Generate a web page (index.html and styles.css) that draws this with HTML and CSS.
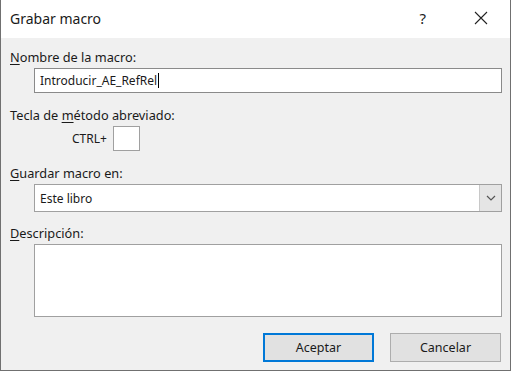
FILE: index.html
```html
<!DOCTYPE html>
<html lang="es">
<head>
<meta charset="utf-8">
<title>Grabar macro</title>
<link rel="stylesheet" href="styles.css">
</head>
<body>
<div class="window">
  <div class="titlebar">
    <span class="title">Grabar macro</span>
    <span class="help">?</span>
    <span class="close">
      <svg width="14" height="14" viewBox="0 0 14 14"><path d="M1 1 L13 13 M13 1 L1 13" stroke="#222" stroke-width="1.1" fill="none"/></svg>
    </span>
  </div>
  <div class="content">
    <div class="field f1">
      <div class="label"><u>N</u>ombre de la macro:</div>
      <div class="control input"><span>Introducir_AE_RefRel</span><span class="caret"></span></div>
    </div>
    <div class="field f2">
      <div class="label">Tecla de <u>m</u>étodo abreviado:</div>
      <div class="shortcut"><span class="ctrl">CTRL+</span><span class="keybox"></span></div>
    </div>
    <div class="field f3">
      <div class="label"><u>G</u>uardar macro en:</div>
      <div class="control select"><span class="value">Este libro</span><span class="drop"><svg width="10" height="6" viewBox="0 0 10 6"><path d="M1 1 L5 5 L9 1" stroke="#555" stroke-width="1.2" fill="none"/></svg></span></div>
    </div>
    <div class="field f4">
      <div class="label"><u>D</u>escripción:</div>
      <div class="control textarea"></div>
    </div>
    <div class="buttons">
      <div class="btn primary">Aceptar</div>
      <div class="btn">Cancelar</div>
    </div>
  </div>
</div>
</body>
</html>
```
FILE: styles.css
```css
html, body {
  margin: 0;
  padding: 0;
  background: #ffffff;
}
body {
  font-family: "Noto Sans", "Open Sans", sans-serif;
  font-size: 12px;
  color: #1a1a1a;
}
.window {
  width: 509px;
  height: 370px;
  border-left: 1px solid #707070;
  border-right: 1px solid #707070;
  border-bottom: 1px solid #707070;
  background: #f0f0f0;
  display: flex;
  flex-direction: column;
}
.titlebar {
  height: 38px;
  background: #ffffff;
  display: flex;
  align-items: center;
  padding-left: 9px;
  box-sizing: border-box;
  padding-bottom: 2px;
}
.title {
  font-size: 14px;
  color: #1a1a1a;
  flex: 1;
}
.help {
  font-size: 15px;
  color: #222;
  margin-right: 48px;
}
.close {
  display: flex;
  margin-right: 22px;
}
.content {
  padding: 10px 8px 0 9px;
  display: flex;
  flex-direction: column;
}
.field {
  display: flex;
  flex-direction: column;
  gap: 2px;
}
.label {
  line-height: 18px;
  height: 18px;
  font-size: 12.75px;
}
.label u {
  text-decoration-thickness: 1px;
  text-underline-offset: 2px;
}
.f2 { margin-top: 13px; }
.f3 { margin-top: 13px; }
.f4 { margin-top: 12px; }
.control {
  margin-left: 24px;
  background: #ffffff;
  border: 1px solid #8a8a8a;
  box-sizing: border-box;
}
.input {
  height: 25px;
  display: flex;
  align-items: center;
  padding-left: 5px;
}
.caret {
  display: inline-block;
  width: 1px;
  height: 15px;
  background: #000;
  margin-left: 1px;
}
.shortcut {
  display: flex;
  align-items: center;
  margin-left: 62px;
  height: 25px;
  gap: 6px;
}
.keybox {
  width: 27px;
  height: 25px;
  box-sizing: border-box;
  background: #ffffff;
  border: 1px solid #a0a0a0;
}
.select {
  height: 28px;
  display: flex;
  align-items: center;
  border-color: #a0a0a0;
}
.select .value {
  flex: 1;
  padding-left: 5px;
}
.drop {
  width: 21px;
  height: 26px;
  background: #e5e5e5;
  border-left: 1px solid #c8c8c8;
  display: flex;
  align-items: center;
  justify-content: center;
}
.textarea {
  height: 73px;
  border-color: #a0a0a0;
}
.buttons {
  margin-top: 16px;
  display: flex;
  justify-content: flex-end;
  gap: 16px;
  padding-right: 1px;
}
.btn {
  width: 111px;
  height: 29px;
  box-sizing: border-box;
  background: #e1e1e1;
  border: 1px solid #adadad;
  display: flex;
  align-items: center;
  justify-content: center;
  font-size: 12.5px;
}
.btn.primary {
  border: 2px solid #0078d7;
}
```
